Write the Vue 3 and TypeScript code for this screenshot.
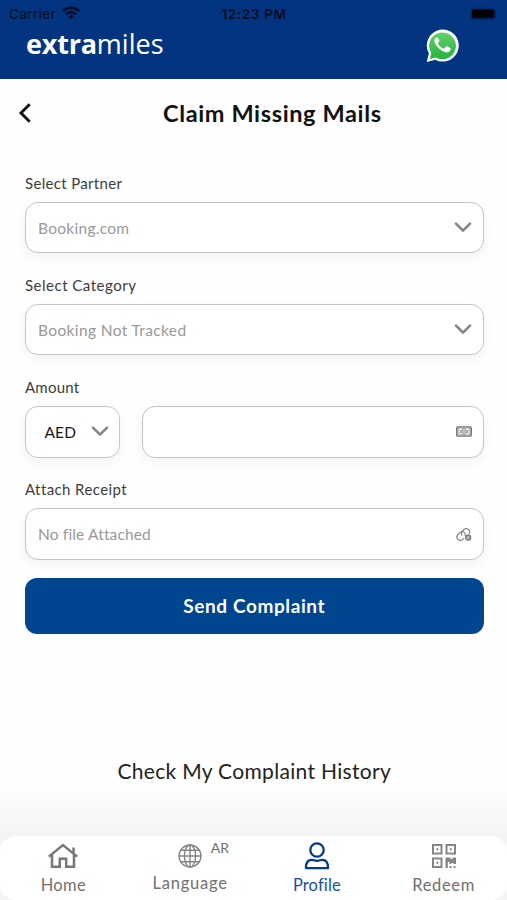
<script setup lang="ts">
import { ref } from 'vue'

interface SelectField {
  label: string
  value: string
}

const selects: SelectField[] = [
  { label: 'Select Partner', value: 'Booking.com' },
  { label: 'Select Category', value: 'Booking Not Tracked' },
]
const amount = ref('')
</script>

<template>
  <div class="screen">
    <header class="header">
      <div class="status">
        <div class="carrier">
          <span class="carrier-name">Carrier</span>
          <svg width="18" height="14" viewBox="0 0 18 14" fill="none" stroke="#020d22" stroke-width="2.6">
            <path d="M1 5C5.5 .7 12.500 .7 17 5" />
            <path d="M4 8.300C6.800 5.500 11.200 5.500 14 8.300" />
            <path d="M6.400 10.200C7.900 8.900 10.100 8.900 11.600 10.200L9 13Z" fill="#020d22" stroke="none" />
          </svg>
        </div>
        <span class="clock">12:23 PM</span>
        <svg class="battery" width="30" height="14" viewBox="0 0 30 14">
          <rect x="1.500" y="1" width="25" height="11.500" rx="3.500" fill="none" stroke="#02245c" />
          <rect x="2.800" y="2.300" width="22.600" height="8.900" rx="2" fill="#000208" />
          <path d="M28 5q1.500 1.800 0 3.600Z" fill="#02245c" />
        </svg>
      </div>
      <div class="brand">
        <div class="logo"><b>extra</b><span>miles</span></div>
        <svg class="whatsapp" width="33" height="34" viewBox="0 0 33 34">
          <defs>
            <linearGradient id="wa" x1="0" y1="0" x2="0" y2="1">
              <stop offset="0" stop-color="#5fd069" />
              <stop offset="1" stop-color="#27b43e" />
            </linearGradient>
          </defs>
          <path d="M.7 33 2.900 24.600A16 16 0 1 1 9.200 30.700Z" fill="#fff" />
          <path d="M3.700 30 5.300 24.200A13.400 13.400 0 1 1 9.700 28.400Z" fill="url(#wa)" />
          <path d="M12.300 9.300c-.4-.9-.8-.9-1.300-.9-.8 0-1.500.4-2 1.200-.9 1.300-.8 3.300.3 5.200 2.200 3.700 5.300 6.700 9.300 8.100 2.600 1 4.900.2 5.700-1.700.3-.8.5-1.700.2-2-.6-.6-2.900-1.700-3.600-1.900-.5-.1-.8 0-1.100.4l-1.300 1.600c-.3.4-.7.400-1.200.2-2.400-1.100-4.100-2.800-5.200-4.800-.3-.5-.1-.8.2-1.100.9-1.100 1.300-1.500 1-2.100Z" fill="#fff" />
        </svg>
      </div>
    </header>

    <div class="title-bar">
      <svg class="back" width="14" height="20" viewBox="0 0 14 20" fill="none" stroke="#111" stroke-width="2.900">
        <path d="M11.700 1.300 3 10l8.700 8.700" />
      </svg>
      <h1>Claim Missing Mails</h1>
    </div>

    <main class="form">
      <div v-for="(field, i) in selects" :key="field.label" class="field">
        <label :class="'label-' + i">{{ field.label }}</label>
        <div class="box">
          <span :class="'value-' + i">{{ field.value }}</span>
          <svg class="chevron" width="18" height="11" viewBox="0 0 18 11"><path d="M2 1.600 9 8.600l7-7" /></svg>
        </div>
      </div>
      <div class="field">
        <label class="label-2">Amount</label>
        <div class="row">
          <div class="box currency">
            <span>AED</span>
            <svg class="chevron" width="18" height="11" viewBox="0 0 18 11"><path d="M2 1.600 9 8.600l7-7" /></svg>
          </div>
          <div class="box amount">
            <input v-model="amount" aria-label="Amount" />
            <svg width="16" height="11" viewBox="0 0 16 11" fill="none" stroke="#777">
              <rect x=".7" y=".9" width="14.600" height="9.200" rx="1" stroke-width="1.400" fill="#c4c4c4" />
              <path d="M4.600 2.800h6.800L13 5.500l-1.600 2.700H4.600L3 5.500Z" stroke="none" fill="#fff" />
              <ellipse cx="8" cy="5.500" rx="2" ry="2.900" />
              <path d="M4.800 4v3M11.200 4v3M8 4.200v2.600" />
            </svg>
          </div>
        </div>
      </div>
      <div class="field">
        <label class="label-3">Attach Receipt</label>
        <div class="box attach">
          <span class="value-2">No file Attached</span>
          <svg width="16" height="15" viewBox="0 0 16 15" fill="none" stroke="#7d7d7d" stroke-width="1.100">
            <path d="M8.200 11.200 7 12.400A3.500 3.500 0 0 1 2 7.500L4.300 5.200A3.200 3.200 0 0 1 9 9.200" />
            <path d="M6.200 8.700A3.300 3.300 0 0 1 6.200 4.300L8 2.500A3.300 3.300 0 0 1 12.800 7" />
            <circle cx="12.200" cy="10.700" r="2.400" fill="#bbb" stroke="#777" stroke-width="1.400" />
          </svg>
        </div>
      </div>
      <button class="send"><span>Send Complaint</span></button>
      <a class="history">Check My Complaint History</a>
    </main>

    <div class="dock">
      <nav class="tabs">
        <div class="tab">
          <svg width="32" height="26" viewBox="0 0 32 26" fill="none" stroke="#777" stroke-width="2.500">
            <path d="M1.800 13.600 16 2l14.200 11.600" />
            <path d="M5 11.300v12.400h7.800v-8h6.400v8H27V11.300M26.500 4.500v6" />
          </svg>
          <span class="t-home">Home</span>
        </div>
        <div class="tab language">
          <svg width="24" height="24" viewBox="0 0 24 24" fill="none" stroke="#858585" stroke-width="1.400">
            <circle cx="12" cy="12" r="11" />
            <ellipse cx="12" cy="12" rx="5.600" ry="11" />
            <path d="M12 1v22M1 12h22M2.700 6.300h18.600M2.700 17.700h18.600" />
          </svg>
          <span class="t-lang">Language</span>
          <span class="badge">AR</span>
        </div>
        <div class="tab active">
          <svg width="26" height="28" viewBox="0 0 26 28" fill="none" stroke="#07398a" stroke-width="2.300">
            <circle cx="13" cy="8" r="6.700" />
            <path d="M2.500 26.200c-.5 0-.7-.4-.6-1 .3-3.900 1.900-7.400 5.500-7.400 2.200 0 3 1 5.600 1s3.400-1 5.600-1c3.600 0 5.200 3.500 5.500 7.400.1.600-.1 1-.6 1Z" />
          </svg>
          <span class="t-prof">Profile</span>
        </div>
        <div class="tab">
          <svg width="24" height="24" viewBox="0 0 24 24" fill="none" stroke="#858585" stroke-width="2">
            <path d="M1 1h8.500v8.500H1ZM14.500 1H23v8.500h-8.500ZM1 14.500h8.500V23H1Z" />
            <path d="M4.300 4.300h2v2h-2ZM17.800 4.300h2v2h-2ZM4.300 17.800h2v2h-2ZM13.500 13.500h5v1.500h2v-1.500H24v6.500h-2.500v-1h-2v1h-2v-2H15.800v6h-2.300ZM17.500 22h2v2h-2ZM21.500 22h2v2h-2Z" fill="#858585" stroke="none" />
          </svg>
          <span class="t-redeem">Redeem</span>
        </div>
      </nav>
    </div>
  </div>
</template>

<style>
body { margin: 0; background: #fff; }
</style>

<style scoped>
* { box-sizing: border-box; }
.screen {
  width: 507px;
  height: 900px;
  display: flex;
  flex-direction: column;
  overflow: hidden;
  background: #fefefe;
  font-family: Lato, "Liberation Sans", sans-serif;
  white-space: nowrap;
}
svg { display: block; flex: none; }
.header { height: 79px; background: #03347f; flex: none; }
.status {
  height: 27px;
  padding: 0 8px 0 9px;
  display: grid;
  grid-template-columns: 1fr auto 1fr;
  align-items: center;
  font-family: Inter, sans-serif;
  font-size: 13.5px;
  color: #020d22;
}
.carrier { display: flex; align-items: center; gap: 6px; }
.carrier svg { position: relative; top: -1px; }
.carrier-name { letter-spacing: 0.4px; }
.clock { font-weight: 600; letter-spacing: 0.65px; }
.battery { justify-self: end; }
.brand {
  height: 38px;
  padding: 0 48px 0 26px;
  display: flex;
  align-items: center;
  justify-content: space-between;
}
.logo {
  margin-top: -4px;
  font-family: "Open Sans", sans-serif;
  font-size: 27px;
  line-height: 34px;
  color: #fff;
}
.logo b { letter-spacing: -0.2px; }
.title-bar {
  height: 69px;
  padding: 0 18px;
  display: grid;
  grid-template-columns: 14px 1fr;
  align-items: center;
}
h1 { margin: 0 0 0 131px; font-size: 23.500px; line-height: 30px; font-weight: 700; letter-spacing: 0.630px; color: #111; }
.form { padding: 26.500px 23.500px 0 25px; display: flex; flex-direction: column; }
.field { height: 102.200px; flex: none; }
.field label {
  display: block;
  height: 20px;
  margin-bottom: 9px;
  font-size: 15px;
  line-height: 20px;
  color: #3c3c3c;
  width: max-content;
}
.field .label-0 { letter-spacing: 0.330px; }
.field .label-1 { letter-spacing: 0.500px; }
.field .label-2 { letter-spacing: 0.250px; }
.field .label-3 { letter-spacing: 0.400px; }
.value-0 { letter-spacing: 0.280px; }
.value-1 { letter-spacing: 0.370px; }
.value-2 { letter-spacing: 0.150px; }
.box {
  height: 51.500px;
  padding: 0 10.500px 0 12px;
  display: flex;
  align-items: center;
  justify-content: space-between;
  border: 1.500px solid #c5c5c5;
  border-radius: 13px;
  background: #fff;
  box-shadow: 0 4px 12px rgba(0, 0, 0, 0.05);
  color: #989898;
  font-size: 15.500px;
}
.amount, .attach { padding-right: 11px; }
.chevron path { fill: none; stroke: #858585; stroke-width: 2.600; stroke-linecap: round; stroke-linejoin: round; }
.row { display: flex; gap: 22px; }
.currency { width: 95px; padding: 0 10.500px 0 18.500px; color: #171717; letter-spacing: 0.1px; }
.amount { flex: 1; }
.amount input { flex: 1; min-width: 0; border: 0; outline: 0; background: transparent; }
.send {
  height: 56px;
  margin-top: -4px;
  border: 0;
  border-radius: 12px;
  background: #00468f;
  color: #fff;
  font-family: inherit;
  font-size: 19px;
  font-weight: 700;
  letter-spacing: 0.600px;
}
.history { margin-top: 122.500px; align-self: center; font-size: 21px; line-height: 30px; letter-spacing: 0.320px; color: #222; }
.dock {
  margin-top: auto;
  padding-top: 50px;
  background: linear-gradient(#fefefe, #f4f4f4 50px);
  flex: none;
}
.tabs {
  height: 64px;
  display: grid;
  grid-template-columns: repeat(4, 1fr);
  border-radius: 16px;
  background: #fff;
}
.tab { display: flex; flex-direction: column; align-items: center; color: #707070; font-size: 16.500px; padding-top: 6px; }
.tab svg { height: 28px; }
.tab > span { line-height: 22px; margin-top: 4px; letter-spacing: 0.35px; }
.active { color: #17509f; }
.active > .t-prof { letter-spacing: 0.15px; }
.tab > .t-redeem { letter-spacing: 0.650px; }
.language { position: relative; }
.language > .t-lang { margin-top: 1.500px; letter-spacing: 0.750px; }
.language > .badge { position: absolute; left: 84px; top: 1px; margin: 0; font-size: 14px; letter-spacing: 0; }
</style>
